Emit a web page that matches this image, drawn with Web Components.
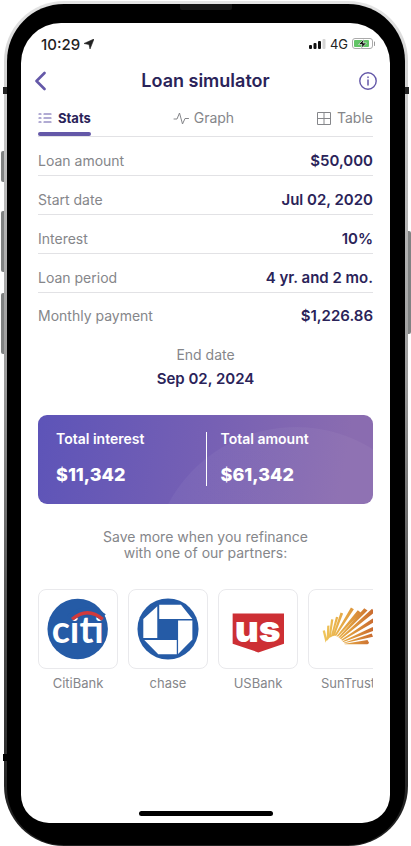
<!DOCTYPE html>
<html lang="en">
<head>
<meta charset="utf-8">
<meta name="viewport" content="width=device-width, initial-scale=1">
<title>Loan simulator</title>
<style>
    body {
        margin: 0;
        background: #fff;
        color: #2a2359;
        font-family: Inter, "Liberation Sans", sans-serif;
        font-size: 14px;
        --muted: #85868a;
        --accent: #6458a8;
        --line: #e2e2e5;
    }
    svg { display: block; }
</style>
</head>
<body>
<phone-frame>
    <status-bar time="10:29" network="4G"></status-bar>
    <title-bar>Loan simulator</title-bar>
    <tab-bar>
        <tab-item selected icon="stats">Stats</tab-item>
        <tab-item icon="graph">Graph</tab-item>
        <tab-item icon="table">Table</tab-item>
    </tab-bar>
    <loan-stats></loan-stats>
    <end-date>
        <span slot="label">End date</span>
        Sep 02, 2024
    </end-date>
    <totals-card>
        <total-item label="Total interest">$11,342</total-item>
        <total-item label="Total amount">$61,342</total-item>
    </totals-card>
    <partner-list>
        <span slot="intro">Save more when you refinance<br>with one of our partners:</span>
        <partner-card name="CitiBank">
            <svg viewBox="0 0 240 240" aria-hidden="true">
                <circle cx="119" cy="120" r="93" fill="#255ba6"/>
                <text x="39" y="163" font-family="Lato" font-weight="700" font-size="116" fill="#fff">citi</text>
                <path d="M94 86Q149 46 198 84" fill="none" stroke="#255ba6" stroke-width="24"/>
                <path d="M102 90Q149 50 196 90" fill="none" stroke="#d03a3c" stroke-width="11"/>
            </svg>
        </partner-card>
        <partner-card name="chase">
            <svg viewBox="0 0 240 240" aria-hidden="true">
                <circle cx="120" cy="120" r="94" fill="#255ba6"/>
                <path d="M93 45H160L195 89H93ZM151 94H195V152L151 197ZM47 154H147V198H90ZM87 50V148H44V89Z" fill="#fff"/>
            </svg>
        </partner-card>
        <partner-card name="USBank">
            <svg viewBox="0 0 240 240" aria-hidden="true">
                <path d="M42 72H200V165L121 192L42 165Z" fill="#cd2f34"/>
                <text x="119" y="161" text-anchor="middle" font-family="Inter" font-weight="900" font-size="114" fill="#fff">us</text>
            </svg>
        </partner-card>
        <partner-card name="SunTrust">
            <svg viewBox="0 0 240 240" aria-hidden="true">
                <defs>
                    <linearGradient id="sun" gradientUnits="userSpaceOnUse" x1="44" y1="0" x2="200" y2="0">
                        <stop offset="0" stop-color="#f0c65a"/>
                        <stop offset=".5" stop-color="#e2a040"/>
                        <stop offset="1" stop-color="#c9692f"/>
                    </linearGradient>
                </defs>
                <path d="M51 162L42 125L49 124L55 150ZM54 158L56 110L63 109L61 150ZM60 150L68 90L75 91L67 144ZM66 147L83 82L90 84L73 141ZM72 143L97 69L105 72L79 140ZM78 141L129 54L138 59L84 141ZM84 143L150 62L159 69L90 143ZM90 146L170 56L180 63L95 147ZM94 149L194 58L202 68L99 151ZM99 153L196 88L202 98L102 156ZM103 158L196 114L200 125L106 160ZM107 162L193 134L197 144L108 164ZM110 165L180 154L185 163L180 167L110 167Z" fill="url(#sun)"/>
            </svg>
        </partner-card>
    </partner-list>
</phone-frame>

<script>
const tabIcons = {
    stats: '<path d="M1 3h2M1 7h2M1 11h2M6 3h7M6 7h7M6 11h7" stroke-width="1.2" stroke-linecap="round"/>',
    graph: '<path d="M0 8H3L5.500 2L8.500 13L11 7.500H14.500" stroke-width="1" stroke-linejoin="round" stroke-linecap="round"/>',
    table: '<path d="M.5 1.500H13.500V13.500H.5ZM7 1.500V13.500M.5 7.500H13.500" stroke-width="1"/>'
};

const loanStats = [
    { label: 'Loan amount', value: '$50,000' },
    { label: 'Start date', value: 'Jul 02, 2020' },
    { label: 'Interest', value: '10%' },
    { label: 'Loan period', value: '4 yr. and 2 mo.' },
    { label: 'Monthly payment', value: '$1,226.86' }
];

class BaseElement extends HTMLElement {
    constructor() {
        super();
        this.attachShadow({ mode: 'open' });
    }

    connectedCallback() {
        this.shadowRoot.innerHTML = this.template();
    }
}

class PhoneFrame extends BaseElement {
    template() {
        return `
            <style>
                :host {
                    display: flex;
                    position: relative;
                    box-sizing: border-box;
                    min-height: 100vh;
                    padding: 1px 3px 0 4px;
                }
                .metal {
                    flex: 1;
                    min-width: 0;
                    display: flex;
                    padding: 3px 3px 1px;
                    border-radius: 60px;
                    background: linear-gradient(#e4e4e4, #bdbdbd 20%, #9a9a9a 45%, #555 70%, #222 95%);
                }
                .bezel {
                    flex: 1;
                    min-width: 0;
                    display: flex;
                    padding: 19px 15px 22px 14px;
                    border-radius: 57px;
                    background: #000;
                }
                .screen {
                    flex: 1;
                    min-width: 0;
                    display: flex;
                    flex-direction: column;
                    padding: 0 17px;
                    border-radius: 40px 40px 28px 28px;
                    background: #fff;
                }
                .home {
                    flex: none;
                    width: 40%;
                    height: 5px;
                    margin: auto auto 7px;
                    border-radius: 3px;
                    background: #000;
                }
                /* hardware keys and antenna gaps on the rim */
                .key {
                    position: absolute;
                    left: 1px;
                    width: 3px;
                    border-radius: 2px 0 0 2px;
                    background: #808282;
                }
                .mute { top: 151px; height: 31px; }
                .up { top: 211px; height: 61px; }
                .down { top: 293px; height: 61px; }
                .power { top: 231px; left: auto; right: 0; height: 103px; border-radius: 0 2px 2px 0; }
                .gap { position: absolute; width: 4px; height: 7px; background: #222; left: 3px; top: 87px; }
                .gap.right { left: auto; right: 2px; }
                .gap.low { top: 754px; background: #000; }
                .speaker { position: absolute; top: 4px; left: 180px; width: 52px; height: 6px; background: #151515; border-radius: 0 0 2px 2px; }
            </style>
            <div class="metal"><div class="bezel"><main class="screen">
                <slot></slot>
                <div class="home"></div>
            </main></div></div>
            <i class="key mute"></i><i class="key up"></i><i class="key down"></i><i class="key power"></i>
            <i class="gap"></i><i class="gap right"></i><i class="gap low"></i><i class="speaker"></i>
        `;
    }
}

class StatusBar extends BaseElement {
    template() {
        return `
            <style>
                :host {
                    display: flex;
                    align-items: center;
                    justify-content: space-between;
                    height: 20px;
                    margin-right: -3px;
                    padding: 11px 0 1px 3px;
                    color: #222;
                }
                div { display: flex; align-items: center; gap: 4px; }
                time { font-size: 15px; font-weight: 500; }
                .net { font-size: 13px; }
            </style>
            <div>
                <time>${this.getAttribute('time')}</time>
                <svg width="10" height="10" viewBox="0 0 10 10"><path d="M10 0L6 10L5 5.500L0 4.500Z" fill="#222" stroke="#222" stroke-width=".6" stroke-linejoin="round"/></svg>
            </div>
            <div>
                <svg width="17" height="10" viewBox="0 0 17 10" fill="#111">
                    <rect y="6" width="3" height="4" rx="1"/>
                    <rect x="4.500" y="4" width="3" height="6" rx="1"/>
                    <rect x="9" y="2" width="3" height="8" rx="1"/>
                    <rect x="13.500" width="3" height="10" rx="1" fill="#d4d4d4"/>
                </svg>
                <span class="net">${this.getAttribute('network')}</span>
                <svg width="24" height="12" viewBox="0 0 24 12">
                    <rect x=".5" y=".5" width="20" height="10" rx="2.500" fill="#fff" stroke="#aaa"/>
                    <rect x="2" y="2" width="15" height="7" rx="1" fill="#62c466"/>
                    <path d="M12 1L6.500 6.500H10L9 10.500L14.500 5H11Z" fill="#111" stroke="#fff" stroke-width=".6"/>
                    <path d="M22.500 4V7.500" stroke="#999" stroke-linecap="round"/>
                </svg>
            </div>
        `;
    }
}

class TitleBar extends BaseElement {
    template() {
        return `
            <style>
                :host {
                    display: grid;
                    grid-template-columns: 24px 1fr 24px;
                    align-items: center;
                    height: 24px;
                    margin: 14px -4px 0;
                }
                h1 { margin: 0; font-size: 18px; line-height: 24px; font-weight: 600; text-align: center; }
                button { padding: 0; border: 0; background: none; color: var(--accent); }
                svg { display: block; fill: none; stroke: currentColor; }
                .info svg { margin-left: auto; }
            </style>
            <button aria-label="Back">
                <svg width="12" height="20" viewBox="0 0 12 20"><path d="M10.500 2L2.500 10L10.500 18" stroke-width="2.600" stroke-linecap="round" stroke-linejoin="round"/></svg>
            </button>
            <h1><slot></slot></h1>
            <button class="info" aria-label="Info">
                <svg width="18" height="18" viewBox="0 0 18 18"><circle cx="9" cy="9" r="8.200" stroke-width="1.400"/><path d="M9 8V13M9 5V5.500" stroke-width="1.500" stroke-linecap="round"/></svg>
            </button>
        `;
    }
}

class TabBar extends BaseElement {
    template() {
        return `
            <style>
                :host {
                    display: flex;
                    justify-content: space-between;
                    margin-top: 14px;
                    border-bottom: 1px solid var(--line);
                }
            </style>
            <slot></slot>
        `;
    }

    connectedCallback() {
        super.connectedCallback();
        this.setAttribute('role', 'tablist');
    }
}

class TabItem extends BaseElement {
    template() {
        return `
            <style>
                :host { display: block; color: var(--muted); }
                :host([selected]) { color: inherit; }
                button {
                    display: flex;
                    align-items: center;
                    gap: 6px;
                    height: 29px;
                    padding: 0 0 8px;
                    border: 0;
                    background: none;
                    color: inherit;
                    font: inherit;
                }
                svg { display: block; fill: none; stroke: currentColor; overflow: visible; }
                :host([selected]) button { font-size: 13px; font-weight: 700; }
                :host([selected]) svg { stroke: var(--accent); }
                .bar { height: 4px; margin-top: -4px; border-radius: 2px; }
                :host([selected]) .bar { background: var(--accent); }
            </style>
            <button role="tab" aria-selected="${this.hasAttribute('selected')}">
                <svg width="14" height="14" viewBox="0 0 14 14">${tabIcons[this.getAttribute('icon')]}</svg>
                <slot></slot>
            </button>
            <div class="bar"></div>
        `;
    }
}

class LoanStats extends BaseElement {
    template() {
        return `
            <style>
                :host { display: block; }
                dl { margin: 0; }
                div {
                    display: flex;
                    align-items: center;
                    justify-content: space-between;
                    height: 30px;
                    padding: 8px 0 0;
                    border-bottom: 1px solid var(--line);
                }
                div:last-child { border: 0; height: 28px; }
                dt { color: var(--muted); }
                dd { margin: 0; font-size: 15px; font-weight: 600; }
            </style>
            <dl>
                ${loanStats.map(s => `<div><dt>${s.label}</dt><dd>${s.value}</dd></div>`).join('')}
            </dl>
        `;
    }
}

class EndDate extends BaseElement {
    template() {
        return `
            <style>
                :host { display: block; margin-top: 14px; text-align: center; font-size: 15px; line-height: 24px; font-weight: 600; }
                .label { color: var(--muted); font-size: 14px; font-weight: 400; }
            </style>
            <div class="label"><slot name="label"></slot></div>
            <div><slot></slot></div>
        `;
    }
}

class TotalsCard extends BaseElement {
    template() {
        return `
            <style>
                :host {
                    display: grid;
                    grid-template-columns: 1fr 1fr;
                    margin-top: 24px;
                    padding: 17px 0 18px;
                    border-radius: 9px;
                    color: #fff;
                    background:
                        radial-gradient(circle at 77% 176%, #ffffff0b 144px, transparent 145px),
                        linear-gradient(100deg, #5d54b8, #7660b4 50%, #8a6cb0 90%);
                }
                ::slotted(:first-child) { padding-left: 18px; }
                ::slotted(:not(:first-child)) { border-left: 1px solid #fff; }
            </style>
            <slot></slot>
        `;
    }
}

class TotalItem extends BaseElement {
    template() {
        return `
            <style>
                :host { display: block; padding-left: 14px; }
                .label { font-size: 14px; line-height: 14px; font-weight: 600; }
                .value { margin-top: 18px; font-size: 18px; line-height: 22px; font-weight: 800; }
            </style>
            <div class="label">${this.getAttribute('label')}</div>
            <div class="value"><slot></slot></div>
        `;
    }
}

class PartnerList extends BaseElement {
    template() {
        return `
            <style>
                :host { display: block; margin-top: 25px; }
                p { margin: 0; color: var(--muted); line-height: 16px; text-align: center; }
                .row { display: flex; gap: 10px; margin-top: 28px; overflow: hidden; }
            </style>
            <p><slot name="intro"></slot></p>
            <div class="row"><slot></slot></div>
        `;
    }
}

class PartnerCard extends BaseElement {
    template() {
        return `
            <style>
                :host { display: block; flex: none; width: 80px; }
                a { display: block; color: var(--muted); font-size: 13px; line-height: 16px; text-align: center; text-decoration: none; }
                .logo { border: 1px solid #e9e9ec; border-radius: 8px; margin-bottom: 6px; }
            </style>
            <a href="#">
                <div class="logo"><slot></slot></div>
                ${this.getAttribute('name')}
            </a>
        `;
    }
}

customElements.define('phone-frame', PhoneFrame);
customElements.define('status-bar', StatusBar);
customElements.define('title-bar', TitleBar);
customElements.define('tab-bar', TabBar);
customElements.define('tab-item', TabItem);
customElements.define('loan-stats', LoanStats);
customElements.define('end-date', EndDate);
customElements.define('totals-card', TotalsCard);
customElements.define('total-item', TotalItem);
customElements.define('partner-list', PartnerList);
customElements.define('partner-card', PartnerCard);
</script>
</body>
</html>
